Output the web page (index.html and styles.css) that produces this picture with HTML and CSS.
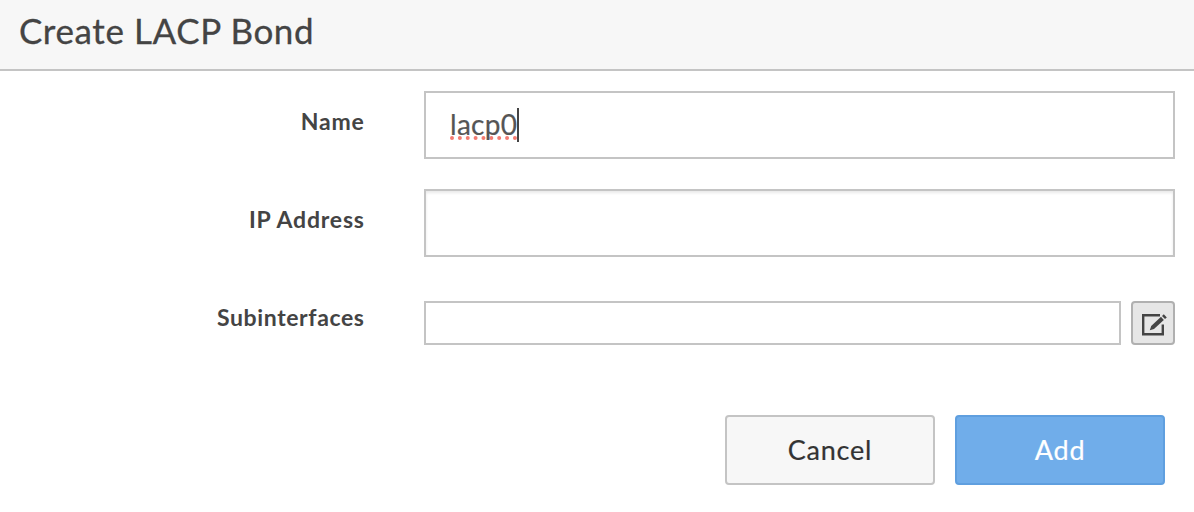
FILE: index.html
```html
<!DOCTYPE html>
<html lang="en">
<head>
<meta charset="utf-8">
<title>Create LACP Bond</title>
<link rel="stylesheet" href="styles.css">
</head>
<body>
<header class="header"><h1 class="title">Create LACP Bond</h1></header>
<main class="form">
  <div class="row">
    <div class="label label-name">Name</div>
    <div class="field"><span class="value">lacp0</span><span class="caret"></span></div>
  </div>
  <div class="row">
    <div class="label label-ip">IP Address</div>
    <div class="field field-inset"></div>
  </div>
  <div class="row">
    <div class="label label-sub">Subinterfaces</div>
    <div class="group">
      <div class="field field-short"></div>
      <button class="edit" aria-label="Edit">
        <svg width="30" height="28" viewBox="0 0 30 28">
          <path d="M22 6.2H5.2V25.2H24.8V15.5" fill="none" stroke="#444" stroke-width="2.4"/>
          <path d="M11.8 21.2L13.2 16.9L23 7.8L25.8 11L16 20Z" fill="#444"/>
          <path d="M24 6.9L25.8 5.3L28.8 8.5L27 10.1Z" fill="#444"/>
        </svg>
      </button>
    </div>
  </div>
  <div class="actions">
    <button class="btn cancel"><span>Cancel</span></button>
    <button class="btn add"><span>Add</span></button>
  </div>
</main>
</body>
</html>
```
FILE: styles.css
```css
* { box-sizing: border-box; }
body { margin: 0; background: #fff; color: #444; font-family: Lato, "Open Sans", sans-serif; }
.header { height: 71px; padding: 8px 19px 0; background: #f7f7f7; border-bottom: 2px solid #c4c4c4; }
.title { margin: 0; font-size: 35px; line-height: 44px; font-weight: 400; letter-spacing: .6px; white-space: nowrap; -webkit-text-stroke: .3px #444; }
.form { padding: 20px 19px 0 0; }
.row { display: grid; grid-template-columns: 364px 1fr; column-gap: 60px; height: 98px; }
.label { padding-top: 15px; font-size: 23px; line-height: 30px; font-weight: 700; text-align: right; white-space: nowrap; }
.label-name { letter-spacing: .8px; margin-right: -.7px; }
.label-ip { letter-spacing: .8px; margin-right: -.75px; }
.label-sub { letter-spacing: .62px; margin-right: -.58px; }
.field { display: flex; align-items: center; height: 68px; padding-left: 24px; border: 2px solid #c4c4c4; background: #fff; }
.field-inset { box-shadow: inset 0 2px 3px rgba(0, 0, 0, .09); }
.value { margin-top: -2px; font-size: 28px; line-height: 34px; letter-spacing: .3px; color: #555; text-decoration: underline dotted #f47c72 4px; text-underline-offset: 1px; text-decoration-skip-ink: none; -webkit-text-stroke: .2px #555; }
.caret { width: 2px; height: 34px; margin-left: -.5px; background: #444; }
.group { display: flex; gap: 10px; padding-top: 14px; }
.field-short { flex: 1; height: 44px; }
.edit { display: flex; align-items: center; justify-content: center; width: 44px; height: 44px; padding: 0; border: 2px solid #b0b0b0; border-radius: 4px; background: #e6e6e6; }
.edit svg { flex: none; }
.actions { display: flex; justify-content: flex-end; gap: 20px; padding: 30px 10px 0 0; }
.btn { width: 210px; height: 70px; padding: 0; border: 2px solid #c4c4c4; border-radius: 4px; background: #f7f7f7; color: #333; font: 400 27px/36px Lato, "Open Sans", sans-serif; letter-spacing: .8px; -webkit-text-stroke: .2px currentColor; }
.add { background: #70adea; border-color: #5f9fdf; color: #fff; }
```
